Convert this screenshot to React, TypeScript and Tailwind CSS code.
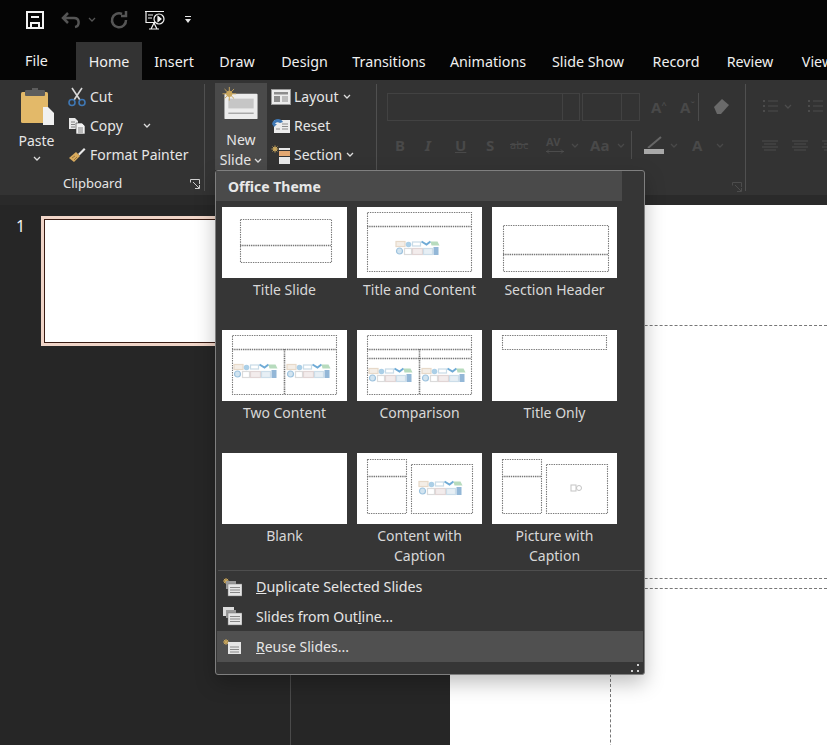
import type { ReactNode } from "react";

function Dash({ x, y, w, h }: { x: number; y: number; w: number; h: number }) {
  return <rect x={x + 0.5} y={y + 0.5} width={w} height={h} fill="none" stroke="#7a7a7a" strokeWidth="1.1" strokeDasharray="1.4 1" />;
}

function Line({ x1, y1, x2, y2 }: { x1: number; y1: number; x2: number; y2: number }) {
  return <line x1={x1} y1={y1 + 0.5} x2={x2} y2={y2 + 0.5} stroke="#777" strokeWidth="1.6" strokeDasharray="1.4 0.8" />;
}

function VLine({ x, y1, y2 }: { x: number; y1: number; y2: number }) {
  return <line x1={x + 0.5} y1={y1} x2={x + 0.5} y2={y2} stroke="#777" strokeWidth="1.6" strokeDasharray="1.4 0.8" />;
}

// the little placeholder picture in a layout thumbnail
function Art({ cx, cy, w = 45 }: { cx: number; cy: number; w?: number }) {
  const s = w / 45;
  return (
    <g transform={`translate(${cx - 22.5 * s} ${cy - 7.5 * s}) scale(${s})`} opacity="0.75" fill="none" strokeWidth="1.2">
      <rect x="0.5" y="1" width="9" height="5" stroke="#e0cdb8" fill="#f1e9e0" />
      <circle cx="13" cy="4" r="2.8" fill="#8fc0e0" />
      <rect x="17" y="1.500" width="8" height="4" stroke="#b6cfe0" />
      <path d="M26 1l5 3 4-3" stroke="#3f8fc9" strokeWidth="2" />
      <path d="M35 1h7l2 4h-8z" fill="#9fd0a8" />
      <circle cx="4" cy="10.500" r="3" stroke="#7fb0d4" fill="#c4dcec" />
      <rect x="9" y="8" width="7" height="6" stroke="#d0d0d0" />
      <rect x="17" y="8" width="10" height="6" stroke="#d8c8c8" fill="#efe6e6" />
      <rect x="28" y="8" width="9" height="6" stroke="#bcd2e2" fill="#dfeaf2" />
      <rect x="38" y="6.500" width="5" height="8" fill="#6f9fca" />
    </g>
  );
}

function Thumb({ children }: { children?: ReactNode }) {
  return (
    <svg viewBox="0 0 125 71" className="h-[71px] w-[125px] bg-white">
      {children}
    </svg>
  );
}

const layouts: { label: ReactNode; art: ReactNode }[] = [
  {
    label: "Title Slide",
    art: (
      <>
        <Dash x={18} y={12} w={91} h={43} />
        <Line x1={18} y1={38} x2={109} y2={38} />
      </>
    ),
  },
  {
    label: "Title and Content",
    art: (
      <>
        <Dash x={10} y={5} w={104} h={59} />
        <Line x1={10} y1={19} x2={114} y2={19} />
        <Art cx={61} cy={41} />
      </>
    ),
  },
  {
    label: "Section Header",
    art: (
      <>
        <Dash x={11} y={18} w={105} h={46} />
        <Line x1={11} y1={47} x2={116} y2={47} />
      </>
    ),
  },
  {
    label: "Two Content",
    art: (
      <>
        <Dash x={10} y={5} w={104} h={59} />
        <Line x1={10} y1={19} x2={114} y2={19} />
        <VLine x={62} y1={19} y2={64} />
        <Art cx={34} cy={41} />
        <Art cx={87} cy={41} />
      </>
    ),
  },
  {
    label: "Comparison",
    art: (
      <>
        <Dash x={10} y={5} w={104} h={59} />
        <Line x1={10} y1={19} x2={114} y2={19} />
        <Line x1={10} y1={28} x2={114} y2={28} />
        <VLine x={62} y1={19} y2={64} />
        <Art cx={34} cy={45} />
        <Art cx={87} cy={45} />
      </>
    ),
  },
  { label: "Title Only", art: <Dash x={10} y={5} w={104} h={14} /> },
  { label: "Blank", art: null },
  {
    label: (
      <>
        Content with
        <br />
        Caption
      </>
    ),
    art: (
      <>
        <Dash x={10} y={6} w={39} h={54} />
        <Line x1={10} y1={23} x2={49} y2={23} />
        <Dash x={54} y={11} w={61} h={49} />
        <Art cx={84} cy={35} />
      </>
    ),
  },
  {
    label: (
      <>
        Picture with
        <br />
        Caption
      </>
    ),
    art: (
      <>
        <Dash x={10} y={6} w={39} h={54} />
        <Line x1={10} y1={23} x2={49} y2={23} />
        <Dash x={54} y={11} w={61} h={49} />
        <g fill="none" stroke="#c4c4c4">
          <rect x="79" y="32" width="5" height="6" />
          <circle cx="87" cy="35" r="2.500" />
        </g>
      </>
    ),
  },
];

function Chevron({ className = "" }: { className?: string }) {
  return (
    <svg viewBox="0 0 8 5" className={`h-[5px] w-2 ${className}`} fill="none" stroke="currentColor" strokeWidth="1.3">
      <path d="M1 1l3 3 3-3" />
    </svg>
  );
}

function Launcher({ color = "#cfcfcf" }: { color?: string }) {
  return (
    <svg viewBox="0 0 10 10" className="h-[10px] w-[10px]" fill="none" stroke={color} strokeWidth="1">
      <path d="M9.500 5V.5H.5v3M3 3l6 6M5 9.500h4.500V6" />
    </svg>
  );
}

function Spark({ x, y, size = 6 }: { x: number; y: number; size?: number }) {
  return (
    <g stroke="#c9a65c" strokeWidth="1">
      <path d={`M${x - size} ${y}H${x + size}M${x} ${y - size}V${y + size}M${x - size * 0.7} ${y - size * 0.7}L${x + size * 0.7} ${y + size * 0.7}M${x + size * 0.7} ${y - size * 0.7}L${x - size * 0.7} ${y + size * 0.7}`} />
      <circle cx={x} cy={y} r={size * 0.4} fill="#c9a65c" />
    </g>
  );
}

function SmallButton({ icon, children, chevron }: { icon: ReactNode; children: ReactNode; chevron?: boolean }) {
  return (
    <div className="flex h-[29px] items-center">
      <span className="flex w-[23px] justify-center">{icon}</span>
      <span className="ml-[2px]">{children}</span>
      {chevron && <Chevron className="ml-[4px] text-[#dddddd]" />}
    </div>
  );
}

function PasteIcon() {
  return (
    <svg viewBox="0 0 36 38" className="h-[38px] w-9">
      <rect x="2" y="4" width="27" height="31" rx="1.500" fill="#e3b969" />
      <rect x="6" y="2" width="20" height="6" rx="1" fill="#5d5d5d" />
      <rect x="13" y="0" width="6" height="4" fill="#5d5d5d" />
      <path d="M24 19h5l6 6v12H24z" fill="#f0f0f0" />
    </svg>
  );
}

function ScissorsIcon() {
  return (
    <svg viewBox="0 0 20 20" className="h-5 w-5" fill="none">
      <path d="M5 1l8 12M15 1L7 13" stroke="#d8d8d8" strokeWidth="1.6" />
      <circle cx="5" cy="15.500" r="3" stroke="#3f78b5" strokeWidth="1.6" />
      <circle cx="15" cy="15.500" r="3" stroke="#3f78b5" strokeWidth="1.6" />
    </svg>
  );
}

function CopyIcon() {
  return (
    <svg viewBox="0 0 18 18" className="h-[18px] w-[18px]">
      <path d="M1 1h6l3 3v8H1z" fill="#e8e8e8" />
      <path d="M8 6h6l3 3v8H8z" fill="#f2f2f2" stroke="#333" strokeWidth="0.6" />
      <path d="M3 5h4M3 7.500h4M3 10h4M10 11h5M10 13h5M10 15h5" stroke="#666" strokeWidth="0.8" />
    </svg>
  );
}

function BrushIcon() {
  return (
    <svg viewBox="0 0 18 16" className="h-4 w-[18px]">
      <path d="M10 7l6-6 1.500 1.500-6 6z" fill="#e8e8e8" />
      <path d="M1 11l7-6 4 4-6 6z" fill="#d9ab5e" />
      <path d="M4 11l3-2M6 13l3-3" stroke="#8a6a33" strokeWidth="0.8" />
    </svg>
  );
}

function LayoutIcon() {
  return (
    <svg viewBox="0 0 20 16" className="h-4 w-5">
      <rect x="0.5" y="0.5" width="19" height="15" fill="#ececec" stroke="#9a9a9a" />
      <rect x="3" y="3" width="14" height="2.500" fill="#8c8c8c" />
      <rect x="3" y="7" width="6" height="6" fill="#8c8c8c" />
      <path d="M11 8h6M11 10h6M11 12h6" stroke="#8c8c8c" />
    </svg>
  );
}

function ResetIcon() {
  return (
    <svg viewBox="0 0 20 17" className="h-[17px] w-5">
      <rect x="3" y="3" width="16" height="13" fill="#ececec" />
      <path d="M11 7h6M11 9.500h6M11 12h6M5 12h4" stroke="#8c8c8c" />
      <path d="M1 7c1-5 8-7 11-2l-3 1c-2-1.500-4-1-5 1l2 0-3 3z" fill="#3f78b5" />
    </svg>
  );
}

function SectionIcon() {
  return (
    <svg viewBox="0 0 20 20" className="h-5 w-5">
      <Spark x={4} y={4} size={3.5} />
      <rect x="8" y="3" width="11" height="2" fill="#e8e8e8" />
      <rect x="8" y="6" width="11" height="5" fill="#e3a872" />
      <rect x="8" y="12" width="11" height="7" fill="#e8e8e8" />
    </svg>
  );
}

function BulletIcon() {
  return (
    <svg viewBox="0 0 16 16" className="h-4 w-4" stroke="#4c4c4c" strokeWidth="1">
      <path d="M6 3h10M6 8h10M6 13h10" />
      <path d="M1 3h2M1 8h2M1 13h2" strokeWidth="2" />
    </svg>
  );
}

function AlignIcon() {
  return (
    <svg viewBox="0 0 16 12" className="h-3 w-4" stroke="#4c4c4c" strokeWidth="1">
      <path d="M0 1h16M2 4h12M0 7h16M2 10h12" />
    </svg>
  );
}

function MenuIcon({ kind }: { kind: "dup" | "outline" | "reuse" }) {
  return (
    <svg viewBox="0 0 20 20" className="h-5 w-5">
      {kind === "dup" && <Spark x={4} y={4} size={3} />}
      {kind === "outline" && <rect x="1" y="1" width="11" height="9" fill="#dcdcdc" />}
      {kind !== "reuse" && <rect x="4" y="4" width="10" height="8" fill="#9a9a9a" />}
      {kind === "reuse" ? (
        <>
          <Spark x={4} y={5} size={3} />
          <rect x="6" y="5" width="13" height="12" fill="#e6e6e6" />
          <path d="M8 10h9M8 12.500h9M8 15h9" stroke="#888" />
        </>
      ) : (
        <>
          <rect x="6" y="7" width="14" height="12" fill="#e6e6e6" stroke="#777" strokeWidth="0.5" />
          <path d="M8 10.500h10M8 13h10M8 15.500h10" stroke="#888" />
        </>
      )}
    </svg>
  );
}

function Grip() {
  return (
    <svg viewBox="0 0 8 8" className="h-2 w-2" fill="#cfcfcf">
      <rect x="6" y="0" width="2" height="2" />
      <rect x="0" y="6" width="2" height="2" />
      <rect x="6" y="6" width="2" height="2" />
    </svg>
  );
}

const tabs: [string, number][] = [
  ["Insert", 64],
  ["Draw", 62],
  ["Design", 73],
  ["Transitions", 96],
  ["Animations", 102],
  ["Slide Show", 98],
  ["Record", 78],
  ["Review", 70],
  ["View", 65],
];

export default function App() {
  return (
    <div className="relative flex h-[745px] w-[827px] flex-col overflow-hidden bg-[#262626] font-['Noto_Sans',sans-serif] text-[14px] text-[#e6e6e6]">
      {/* quick access */}
      <div className="flex h-[42px] shrink-0 items-center bg-[#050505] pb-[3px] pl-[26px]">
        <svg viewBox="0 0 18 18" className="h-[18px] w-[18px]" fill="none" stroke="#f2f2f2" strokeWidth="2">
          <path d="M1 1h16v16H1z" />
          <path d="M5 17v-5h8v5M5 6h8" />
        </svg>
        <svg viewBox="0 0 20 18" className="ml-[17px] h-[18px] w-5" fill="none" stroke="#555" strokeWidth="2.500">
          <path d="M7 2L2 7l5 5M2 7h11c6 0 6 8 1 9" />
        </svg>
        <Chevron className="ml-[7px] text-[#555]" />
        <svg viewBox="0 0 18 18" className="ml-[14px] h-[18px] w-[18px]" fill="none" stroke="#555" strokeWidth="2.500">
          <path d="M12 3a7 7 0 1 0 4 6M16 0v5h-5" />
        </svg>
        <svg viewBox="0 0 22 20" className="ml-[16px] h-5 w-[22px]" fill="none" stroke="#f2f2f2" strokeWidth="1.200">
          <path d="M1 1.500h19M2 1.500v11h10M10 13l-3 6M10 13l3 6M5 19h10" />
          <path d="M4 5h5M4 8h4" />
          <circle cx="15" cy="9" r="5" />
          <path d="M14 6.500l3 2.500-3 2.500z" fill="#f2f2f2" />
        </svg>
        <svg viewBox="0 0 8 8" className="ml-[18px] h-2 w-2" fill="#e6e6e6">
          <rect x="1" y="0" width="6" height="1" />
          <path d="M1 3h6L4 7z" />
        </svg>
      </div>

      {/* tabs */}
      <div className="flex h-[38px] shrink-0 items-stretch bg-[#050505] text-[14.3px] text-[#f0f0f0]">
        <div className="flex w-[76px] shrink-0 items-center justify-center pb-[1px] pr-[3px]">File</div>
        <div className="flex w-[66px] shrink-0 items-center justify-center bg-[#333333] pt-[1px]">Home</div>
        {tabs.map(([name, w]) => (
          <div key={name} className="flex shrink-0 items-center justify-center pt-[1px]" style={{ width: w }}>
            {name}
          </div>
        ))}
      </div>

      {/* ribbon */}
      <div className="flex h-[115px] shrink-0 bg-[#333333]">
        <div className="my-1 flex w-[205px] shrink-0 flex-col border-r border-[#505050]">
          <div className="flex h-[88px] shrink-0">
            <div className="flex w-[65px] flex-col items-center pl-[8px] pt-[4px]">
              <PasteIcon />
              <span className="mt-[4px]">Paste</span>
              <Chevron className="mt-[5px] text-[#dddddd]" />
            </div>
            <div className="-mt-[2px] flex flex-col">
              <SmallButton icon={<ScissorsIcon />}>Cut</SmallButton>
              <SmallButton icon={<CopyIcon />}>
                <span className="flex items-center">
                  Copy
                  <Chevron className="ml-[20px] text-[#dddddd]" />
                </span>
              </SmallButton>
              <SmallButton icon={<BrushIcon />}>Format Painter</SmallButton>
            </div>
          </div>
          <div className="flex items-center pt-[2px] text-[13px]">
            <span className="ml-[63px]">Clipboard</span>
            <span className="ml-[68px]">
              <Launcher />
            </span>
          </div>
        </div>

        <div className="my-1 flex h-[107px] w-[172px] shrink-0 border-r border-[#505050] pl-[10px]">
          <div className="-mt-[1px] flex h-[87px] w-[52px] flex-col items-center bg-[#4a4a4a] leading-[20px]">
            <svg viewBox="0 0 40 38" className="mt-[3px] h-[38px] w-10">
              <rect x="3" y="8" width="34" height="26" rx="1" fill="#ececec" />
              <rect x="7" y="13" width="26" height="10" fill="#c6c6c6" />
              <path d="M7 28h26" stroke="#a8a8a8" strokeWidth="1.500" />
              <Spark x={8} y={8} size={7} />
            </svg>
            <span className="mt-[7px]">New</span>
            <span className="flex items-center">
              Slide
              <Chevron className="ml-[3px] text-[#dddddd]" />
            </span>
          </div>
          <div className="-mt-[2px] ml-[2px] flex flex-col">
            <SmallButton icon={<LayoutIcon />} chevron>
              Layout
            </SmallButton>
            <SmallButton icon={<ResetIcon />}>Reset</SmallButton>
            <SmallButton icon={<SectionIcon />} chevron>
              Section
            </SmallButton>
          </div>
        </div>

        <div className="my-1 flex h-[107px] w-[369px] shrink-0 flex-col border-r border-[#505050] pl-[10px] text-[15px] font-bold text-[#494949]">
          <div className="mt-[9px] flex h-[28px] shrink-0 items-center">
            <div className="flex h-[28px] w-[193px] justify-end border border-[#424242]">
              <div className="w-[17px] border-l border-[#424242]" />
            </div>
            <div className="ml-[2px] flex h-[28px] w-[58px] justify-end border border-[#424242]">
              <div className="w-[18px] border-l border-[#424242]" />
            </div>
            <span className="ml-[11px] w-[29px]">
              A<sup className="text-[9px]">^</sup>
            </span>
            <span className="w-[18px]">
              A<sup className="text-[9px]">ˇ</sup>
            </span>
            <div className="h-[28px] w-px bg-[#4c4c4c]" />
            <svg viewBox="0 0 20 18" className="ml-[12px] h-[18px] w-5">
              <path d="M3 9l8-8 7 6-8 9H6z" fill="#6a6a6a" />
            </svg>
          </div>
          <div className="mt-[10px] flex h-[28px] shrink-0 items-center">
            <span className="ml-[8px] w-[30px]">B</span>
            <span className="w-[30px] italic">I</span>
            <span className="w-[31px] underline">U</span>
            <span className="w-[24px]">S</span>
            <span className="w-[36px] text-[11px] font-normal line-through">abc</span>
            <span className="flex w-[25px] flex-col text-[11px] leading-[10px]">
              AV
              <svg viewBox="0 0 18 5" className="mt-[2px] h-[5px] w-[18px]" fill="none" stroke="#4c4c4c">
                <path d="M0 2.500h18M3 .5L1 2.500l2 2M15 .5l2 2-2 2" />
              </svg>
            </span>
            <Chevron className="text-[#494949]" />
            <span className="ml-[11px] w-[27px]">Aa</span>
            <Chevron className="text-[#494949]" />
            <div className="ml-[6px] h-[28px] w-px bg-[#4c4c4c]" />
            <div className="ml-[12px] flex w-[20px] flex-col">
              <svg viewBox="0 0 20 12" className="h-3 w-5" stroke="#666" strokeWidth="2">
                <path d="M4 12L17 1" />
              </svg>
              <div className="mt-[1px] h-[5px] bg-[#a8a8a8]" />
            </div>
            <Chevron className="ml-[6px] text-[#494949]" />
            <span className="ml-[14px] w-[20px]">A</span>
            <Chevron className="ml-[4px] text-[#494949]" />
          </div>
          <div className="mt-[23px] flex justify-end pr-[3px]">
            <Launcher color="#4c4c4c" />
          </div>
        </div>

        <div className="flex flex-col pl-[16px] pt-[18px]">
          <div className="flex items-center">
            <BulletIcon />
            <Chevron className="ml-[6px] text-[#4c4c4c]" />
            <span className="ml-[15px]">
              <BulletIcon />
            </span>
          </div>
          <div className="mt-[26px] flex gap-[14px]">
            <AlignIcon />
            <AlignIcon />
            <AlignIcon />
          </div>
        </div>
      </div>

      <div className="h-[10px] shrink-0 bg-[#2a2a2a]" />

      {/* work area */}
      <div className="flex flex-1">
        <div className="flex w-[291px] shrink-0 border-r border-[#4a4a4a] pt-[11px]">
          <span className="ml-[16px] w-[25px] text-[16px] leading-[20px] text-[#f2f2f2]">1</span>
          <div className="h-[130px] w-[240px] border-[3px] border-[#f0d5c8] bg-[#f0d5c8]">
            <div className="h-full border border-[#3a1d14] bg-white" />
          </div>
        </div>
        <div className="w-[159px] shrink-0 bg-[#262626]" />
        <div className="flex-1 bg-white pt-[120px]">
          <div className="ml-[100px] h-[254px] border-y border-dashed border-[#777]" />
          <div className="ml-[160px] mt-[9px] h-[200px] border-l border-t border-dashed border-[#777]" />
        </div>
      </div>

      {/* new slide gallery */}
      <div className="absolute left-[215px] top-[170px] flex h-[505px] w-[430px] flex-col rounded-[3px] border border-[#7f7f7f] bg-[#363636] shadow-[0_8px_20px_rgba(0,0,0,0.25)]">
        <div className="mr-[22px] flex h-[30px] shrink-0 items-center bg-[#4a4a4a] pl-[12px] text-[14px] font-bold text-[#e8e8e8]">
          Office Theme
        </div>
        <div className="ml-[6px] mt-[6px] grid grid-cols-[125px_125px_125px] gap-x-[10px]">
          {layouts.map((l, i) => (
            <div key={i} className="flex h-[123px] flex-col items-center">
              <Thumb>{l.art}</Thumb>
              <div className="mt-[2px] text-center leading-[20px] text-[#d8d8d8]">{l.label}</div>
            </div>
          ))}
        </div>
        <div className="mx-[2px] -mt-[6px] border-t border-[#4e4e4e]" />
        <div className="flex flex-col">
          <div className="flex h-[30px] items-center pl-[6px] pt-[1px]">
            <MenuIcon kind="dup" />
            <span className="ml-[14px] text-[14.3px]">
              <u>D</u>uplicate Selected Slides
            </span>
          </div>
          <div className="flex h-[30px] items-center pl-[6px]">
            <MenuIcon kind="outline" />
            <span className="ml-[14px]">
              Slides from Out<u>l</u>ine...
            </span>
          </div>
          <div className="mx-[1px] flex h-[31px] items-center bg-[#505050] pl-[5px]">
            <MenuIcon kind="reuse" />
            <span className="ml-[14px]">
              <u>R</u>euse Slides...
            </span>
          </div>
        </div>
        <div className="flex flex-1 items-center justify-end pr-[5px]">
          <Grip />
        </div>
      </div>
    </div>
  );
}
